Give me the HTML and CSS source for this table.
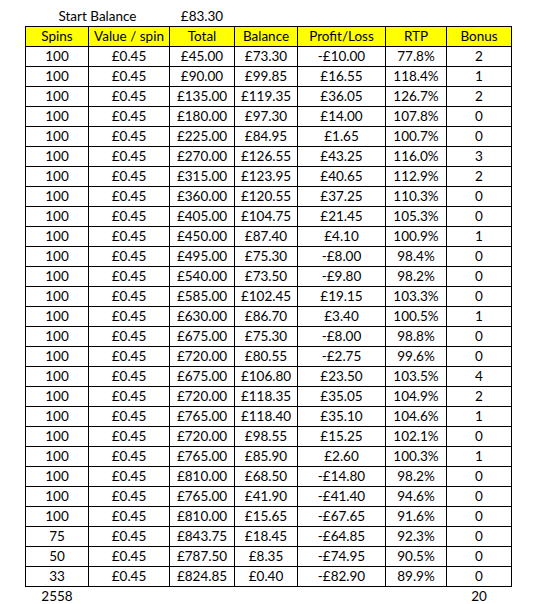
FILE: index.html
```html
<!DOCTYPE html>
<html>
<head>
<meta charset="utf-8">
<link rel="stylesheet" href="styles.css">
</head>
<body>
<div class="sheet">
  <div class="grid plain">
    <div class="c span2">Start Balance</div>
    <div class="c">£83.30</div>
  </div>
  <div class="grid table">
    <div class="c h">Spins</div><div class="c h">Value / spin</div><div class="c h">Total</div><div class="c h">Balance</div><div class="c h">Profit/Loss</div><div class="c h">RTP</div><div class="c h">Bonus</div>
    <div class="c">100</div><div class="c">£0.45</div><div class="c">£45.00</div><div class="c">£73.30</div><div class="c">-£10.00</div><div class="c">77.8%</div><div class="c">2</div>
    <div class="c">100</div><div class="c">£0.45</div><div class="c">£90.00</div><div class="c">£99.85</div><div class="c">£16.55</div><div class="c">118.4%</div><div class="c">1</div>
    <div class="c">100</div><div class="c">£0.45</div><div class="c">£135.00</div><div class="c">£119.35</div><div class="c">£36.05</div><div class="c">126.7%</div><div class="c">2</div>
    <div class="c">100</div><div class="c">£0.45</div><div class="c">£180.00</div><div class="c">£97.30</div><div class="c">£14.00</div><div class="c">107.8%</div><div class="c">0</div>
    <div class="c">100</div><div class="c">£0.45</div><div class="c">£225.00</div><div class="c">£84.95</div><div class="c">£1.65</div><div class="c">100.7%</div><div class="c">0</div>
    <div class="c">100</div><div class="c">£0.45</div><div class="c">£270.00</div><div class="c">£126.55</div><div class="c">£43.25</div><div class="c">116.0%</div><div class="c">3</div>
    <div class="c">100</div><div class="c">£0.45</div><div class="c">£315.00</div><div class="c">£123.95</div><div class="c">£40.65</div><div class="c">112.9%</div><div class="c">2</div>
    <div class="c">100</div><div class="c">£0.45</div><div class="c">£360.00</div><div class="c">£120.55</div><div class="c">£37.25</div><div class="c">110.3%</div><div class="c">0</div>
    <div class="c">100</div><div class="c">£0.45</div><div class="c">£405.00</div><div class="c">£104.75</div><div class="c">£21.45</div><div class="c">105.3%</div><div class="c">0</div>
    <div class="c">100</div><div class="c">£0.45</div><div class="c">£450.00</div><div class="c">£87.40</div><div class="c">£4.10</div><div class="c">100.9%</div><div class="c">1</div>
    <div class="c">100</div><div class="c">£0.45</div><div class="c">£495.00</div><div class="c">£75.30</div><div class="c">-£8.00</div><div class="c">98.4%</div><div class="c">0</div>
    <div class="c">100</div><div class="c">£0.45</div><div class="c">£540.00</div><div class="c">£73.50</div><div class="c">-£9.80</div><div class="c">98.2%</div><div class="c">0</div>
    <div class="c">100</div><div class="c">£0.45</div><div class="c">£585.00</div><div class="c">£102.45</div><div class="c">£19.15</div><div class="c">103.3%</div><div class="c">0</div>
    <div class="c">100</div><div class="c">£0.45</div><div class="c">£630.00</div><div class="c">£86.70</div><div class="c">£3.40</div><div class="c">100.5%</div><div class="c">1</div>
    <div class="c">100</div><div class="c">£0.45</div><div class="c">£675.00</div><div class="c">£75.30</div><div class="c">-£8.00</div><div class="c">98.8%</div><div class="c">0</div>
    <div class="c">100</div><div class="c">£0.45</div><div class="c">£720.00</div><div class="c">£80.55</div><div class="c">-£2.75</div><div class="c">99.6%</div><div class="c">0</div>
    <div class="c">100</div><div class="c">£0.45</div><div class="c">£675.00</div><div class="c">£106.80</div><div class="c">£23.50</div><div class="c">103.5%</div><div class="c">4</div>
    <div class="c">100</div><div class="c">£0.45</div><div class="c">£720.00</div><div class="c">£118.35</div><div class="c">£35.05</div><div class="c">104.9%</div><div class="c">2</div>
    <div class="c">100</div><div class="c">£0.45</div><div class="c">£765.00</div><div class="c">£118.40</div><div class="c">£35.10</div><div class="c">104.6%</div><div class="c">1</div>
    <div class="c">100</div><div class="c">£0.45</div><div class="c">£720.00</div><div class="c">£98.55</div><div class="c">£15.25</div><div class="c">102.1%</div><div class="c">0</div>
    <div class="c">100</div><div class="c">£0.45</div><div class="c">£765.00</div><div class="c">£85.90</div><div class="c">£2.60</div><div class="c">100.3%</div><div class="c">1</div>
    <div class="c">100</div><div class="c">£0.45</div><div class="c">£810.00</div><div class="c">£68.50</div><div class="c">-£14.80</div><div class="c">98.2%</div><div class="c">0</div>
    <div class="c">100</div><div class="c">£0.45</div><div class="c">£765.00</div><div class="c">£41.90</div><div class="c">-£41.40</div><div class="c">94.6%</div><div class="c">0</div>
    <div class="c">100</div><div class="c">£0.45</div><div class="c">£810.00</div><div class="c">£15.65</div><div class="c">-£67.65</div><div class="c">91.6%</div><div class="c">0</div>
    <div class="c">75</div><div class="c">£0.45</div><div class="c">£843.75</div><div class="c">£18.45</div><div class="c">-£64.85</div><div class="c">92.3%</div><div class="c">0</div>
    <div class="c">50</div><div class="c">£0.45</div><div class="c">£787.50</div><div class="c">£8.35</div><div class="c">-£74.95</div><div class="c">90.5%</div><div class="c">0</div>
    <div class="c">33</div><div class="c">£0.45</div><div class="c">£824.85</div><div class="c">£0.40</div><div class="c">-£82.90</div><div class="c">89.9%</div><div class="c">0</div>
  </div>
  <div class="grid plain foot">
    <div class="c">2558</div>
    <div class="c col7">20</div>
  </div>
</div>
</body>
</html>
```

FILE: styles.css
```css
html, body {
  margin: 0;
  padding: 0;
  background: #ffffff;
}
body {
  font-family: Lato, "Open Sans", sans-serif;
  font-size: 13.5px;
  color: #000000;
}
.sheet {
  padding: 6px 0 0 25px;
}
.grid {
  display: grid;
  grid-template-columns: 62px 80px 64px 62px 87px 60px 64px;
  grid-auto-rows: 19px;
  column-gap: 1px;
  row-gap: 1px;
  padding: 0 1px;
  width: 485px;
}
.plain {
  grid-auto-rows: 20px;
  row-gap: 0;
}
.table {
  background: #000000;
  padding: 1px;
}
.c {
  background: #ffffff;
  text-align: center;
  line-height: 19px;
  white-space: nowrap;
  overflow: hidden;
}
.plain .c {
  background: transparent;
  line-height: 21px;
}
.foot {
  grid-auto-rows: 17px;
}
.foot .c {
  line-height: 19px;
  overflow: visible;
}
.span2 {
  grid-column: 1 / 3;
}
.col7 {
  grid-column: 7;
}
.h {
  background: #ffff00;
}
```
